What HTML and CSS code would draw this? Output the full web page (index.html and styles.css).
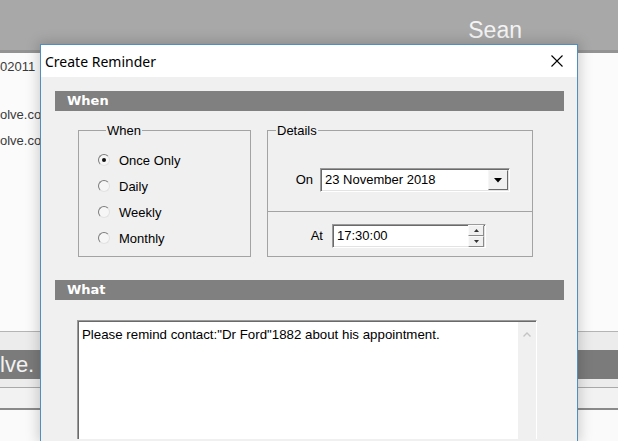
FILE: index.html
```html
<!DOCTYPE html>
<html lang="en">
<head>
    <meta charset="UTF-8">
    <title>Create Reminder</title>
    <link rel="stylesheet" href="styles.css">
</head>
<body>
    <div class="app">
        <div class="topbar"><span class="user">Sean</span></div>
        <div class="topbar-rule"></div>
        <div class="list">
            <div class="cell first">02011</div>
            <div class="cell second">olve.com</div>
            <div class="cell">olve.com</div>
        </div>
        <div class="band-top"></div>
        <div class="band"><span>lve.</span></div>
        <div class="band-gap"></div>
        <div class="band-foot"></div>
        <div class="band-rest"></div>
    </div>

    <div class="dialog">
        <div class="titlebar">
            <span class="title">Create Reminder</span>
            <svg class="close" width="12" height="12" viewBox="0 0 12 12">
                <path d="M0.5 0.5 L11.5 11.5 M11.5 0.5 L0.5 11.5" stroke="#000" stroke-width="1.1" fill="none"/>
            </svg>
        </div>
        <div class="dialog-body">
            <div class="section-bar">When</div>
            <div class="when-row">
                <fieldset class="group when-group">
                    <legend>When</legend>
                    <div class="radio-row"><span class="radio checked"></span>Once Only</div>
                    <div class="radio-row"><span class="radio"></span>Daily</div>
                    <div class="radio-row"><span class="radio"></span>Weekly</div>
                    <div class="radio-row"><span class="radio"></span>Monthly</div>
                </fieldset>
                <fieldset class="group details-group">
                    <legend>Details</legend>
                    <div class="detail on-row">
                        <span class="field-label">On</span>
                        <div class="combo">
                            <span class="field-text">23 November 2018</span>
                            <span class="combo-btn">
                                <svg width="8" height="5" viewBox="0 0 8 5"><path d="M0 0 H8 L4 4.5 Z" fill="#000"/></svg>
                            </span>
                        </div>
                    </div>
                    <div class="detail at-row">
                        <span class="field-label">At</span>
                        <div class="spinbox">
                            <span class="field-text">17:30:00</span>
                            <span class="spin">
                                <span class="spin-btn"><svg width="5" height="3" viewBox="0 0 5 3"><path d="M2.5 0 L5 3 H0 Z" fill="#333"/></svg></span>
                                <span class="spin-btn"><svg width="5" height="3" viewBox="0 0 5 3"><path d="M0 0 H5 L2.5 3 Z" fill="#333"/></svg></span>
                            </span>
                        </div>
                    </div>
                </fieldset>
            </div>
            <div class="section-bar">What</div>
            <div class="memo">
                <div class="memo-text">Please remind contact:"Dr Ford"1882 about his appointment.</div>
                <div class="memo-scroll">
                    <svg width="8" height="5" viewBox="0 0 8 5"><path d="M0.5 4.5 L4 1 L7.5 4.5" stroke="#c4c4c4" stroke-width="1.4" fill="none"/></svg>
                </div>
            </div>
        </div>
    </div>
</body>
</html>
```

FILE: styles.css
```css
body {
    margin: 0;
    width: 618px;
    height: 441px;
    overflow: hidden;
    font-family: "Liberation Sans", Arial, sans-serif;
    font-size: 13px;
    background-color: #fafafa;
}

/* background application */
.app {
    display: flex;
    flex-direction: column;
}
.topbar {
    height: 50px;
    box-sizing: border-box;
    padding: 18px 96px 0 0;
    display: flex;
    justify-content: flex-end;
    background-color: #a8a8a8;
}
.user {
    font-size: 23px;
    line-height: 25px;
    color: #f4f4f4;
}
.topbar-rule {
    height: 3px;
    background-color: #939393;
}
.list {
    height: 278px;
    background-color: #fbfbfb;
}
.cell {
    line-height: 26px;
    color: #3a3a3a;
}
.cell.first {
    margin-top: 1px;
}
.cell.second {
    margin-top: 22px;
}
.band-top {
    height: 18px;
    border-top: 1px solid #b4b4b4;
    background-color: #ececec;
}
.band {
    height: 29px;
    background-color: #7b7b7b;
    color: #f2f2f2;
    font-size: 22px;
    line-height: 29px;
}
.band-gap {
    height: 8px;
    border-bottom: 1px solid #a9a9a9;
    background-color: #ececec;
}
.band-foot {
    height: 20px;
    border-bottom: 2px solid #8a8a8a;
    background-color: #f2f2f2;
}
.band-rest {
    height: 29px;
    background-color: #fafafa;
}

/* dialog */
.dialog {
    position: absolute;
    left: 40px;
    top: 44px;
    width: 536px;
    height: 396px;
    overflow: hidden;
    border: 1px solid #4e8fbd;
    border-bottom: none;
    background-color: #f0f0f0;
    box-shadow: 0 0 12px 2px rgba(0, 0, 0, 0.18);
}
.titlebar {
    height: 32px;
    display: flex;
    align-items: center;
    justify-content: space-between;
    padding: 0 14px 0 4px;
    background-color: #fff;
}
.title {
    font-family: "Noto Sans", sans-serif;
    font-size: 14px;
    color: #000;
}
.dialog-body {
    padding: 14px 13px 0 14px;
}
.section-bar {
    height: 20px;
    line-height: 20px;
    padding-left: 12px;
    background-color: #808080;
    color: #fff;
    font-family: "DejaVu Sans", Verdana, sans-serif;
    font-weight: bold;
    font-size: 13px;
}
.when-row {
    display: flex;
    gap: 16px;
    margin: 12px 0 23px 23px;
}
.group {
    margin: 0;
    padding: 0;
    min-width: 0;
    border: 1px solid #a3a3a3;
    color: #000;
}
.group legend {
    margin-left: 8px;
    padding: 0 1px;
    font-size: 13px;
    line-height: 15px;
}
.when-group {
    width: 152px;
    padding: 9px 0 5px 19px;
}
.details-group {
    width: 264px;
}
.radio-row {
    display: flex;
    align-items: center;
    height: 26px;
}
.radio {
    width: 10px;
    height: 10px;
    margin-right: 9px;
    border: 1px solid;
    border-color: #7c7c7c #e2e2e2 #e2e2e2 #7c7c7c;
    border-radius: 50%;
    background-color: #f6f6f6;
    display: flex;
    align-items: center;
    justify-content: center;
}
.radio.checked::after {
    content: "";
    width: 4px;
    height: 4px;
    border-radius: 50%;
    background-color: #111;
}
.detail {
    display: flex;
    justify-content: flex-end;
    align-items: flex-start;
}
.on-row {
    height: 43px;
    padding: 30px 22px 0 0;
}
.at-row {
    height: 32px;
    padding: 12px 46px 0 0;
    border-top: 1px solid #a3a3a3;
}
.field-label {
    line-height: 24px;
    margin-right: 7px;
}
.at-row .field-label {
    margin-right: 9px;
}
.combo, .spinbox {
    height: 22px;
    display: flex;
    align-items: center;
    justify-content: space-between;
    border: 1px solid;
    border-color: #9a9a9a #fff #fff #9a9a9a;
    box-shadow: inset 1px 1px 0 #6a6a6a, inset -1px -1px 0 #e3e3e3;
    background-color: #fff;
}
.combo {
    width: 188px;
}
.spinbox {
    width: 152px;
}
.field-text {
    padding-left: 4px;
    line-height: 20px;
}
.combo-btn {
    width: 18px;
    height: 18px;
    margin-right: 1px;
    display: flex;
    align-items: center;
    justify-content: center;
    border: 1px solid;
    border-color: #f6f6f6 #6a6a6a #6a6a6a #f6f6f6;
    background-color: #f0f0f0;
}
.spin {
    display: flex;
    flex-direction: column;
    margin-right: 1px;
}
.spin-btn {
    width: 14px;
    height: 9px;
    display: flex;
    align-items: center;
    justify-content: center;
    border: 1px solid;
    border-color: #fafafa #8a8a8a #8a8a8a #fafafa;
    background-color: #f0f0f0;
}
.memo {
    margin: 20px 0 0 22px;
    width: 458px;
    height: 118px;
    display: flex;
    justify-content: space-between;
    border: 1px solid;
    border-bottom: none;
    border-color: #9a9a9a #fff #fff #9a9a9a;
    box-shadow: inset 1px 1px 0 #6a6a6a;
    background-color: #fff;
}
.memo-text {
    padding: 6px 0 0 4px;
    font-size: 13.3px;
    line-height: 15px;
    color: #000;
}
.memo-scroll {
    width: 18px;
    margin-top: 1px;
    padding-top: 10px;
    display: flex;
    justify-content: center;
    align-items: flex-start;
    background-color: #f0f0f0;
}
```
